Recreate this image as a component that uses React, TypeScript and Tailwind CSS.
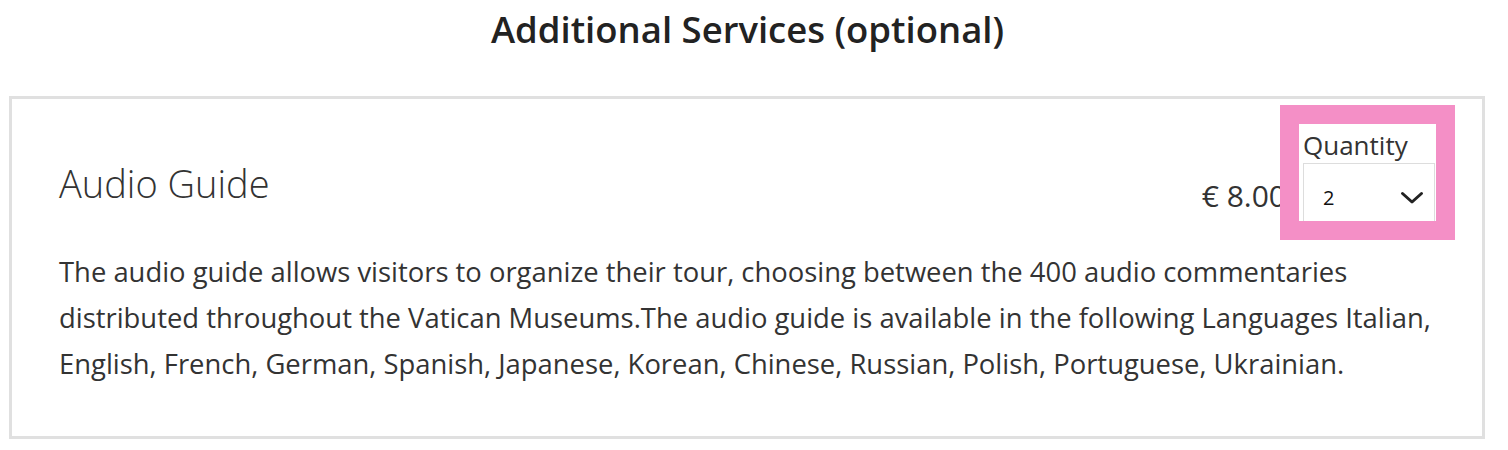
import React from "react";

export default function App() {
  return (
    <div className="w-[1508px] h-[450px] bg-white overflow-hidden" style={{ fontFamily: '"Open Sans", "Noto Sans", sans-serif' }}>
      <div className="pt-[9px] pr-[13px] text-center text-[36.5px] leading-[40px] font-semibold text-[#222]">
        Additional Services (optional)
      </div>
      <div className="mt-[47px] ml-[9px] w-[1476px] border-[3px] border-[#e0e0e0] bg-white">
        <div className="flex items-start pt-[6px] pl-[47px] pr-[27px]">
          <div className="mt-[56px] text-[38px] leading-[44px] font-light text-[#333]">Audio Guide</div>
          <div className="ml-auto mt-[75px] text-[30px] leading-[32px] text-[#333] whitespace-nowrap">€ 8.00</div>
          <div className="relative z-10 -ml-[6px] border-[19px] border-[#f48fc6] bg-white">
            <div className="w-[137px] h-[97px] overflow-hidden">
              <div className="mt-[6px] pl-[4px] text-[26px] leading-[30px] text-[#333]">Quantity</div>
              <div className="mt-[3px] ml-[4px] w-[132px] h-[69px] border border-[#dddddd] flex items-center pl-[19px] pr-[10px]">
                <span className="text-[20px] text-[#111]">2</span>
                <svg className="ml-auto" width="24" height="14" viewBox="0 0 24 14" fill="none">
                  <path d="M2.5 2.5 L12 11 L21.5 2.5" stroke="#222" strokeWidth="3" strokeLinecap="round" strokeLinejoin="round" />
                </svg>
              </div>
            </div>
          </div>
        </div>
        <p className="px-[47px] pt-[9px] pb-[49px] text-[27.4px] leading-[46px] text-[#333]">
          The audio guide allows visitors to organize their tour, choosing between the 400 audio commentaries distributed throughout the Vatican Museums.The audio guide is available in the following Languages Italian, English, French, German, Spanish, Japanese, Korean, Chinese, Russian, Polish, Portuguese, Ukrainian.
        </p>
      </div>
    </div>
  );
}
